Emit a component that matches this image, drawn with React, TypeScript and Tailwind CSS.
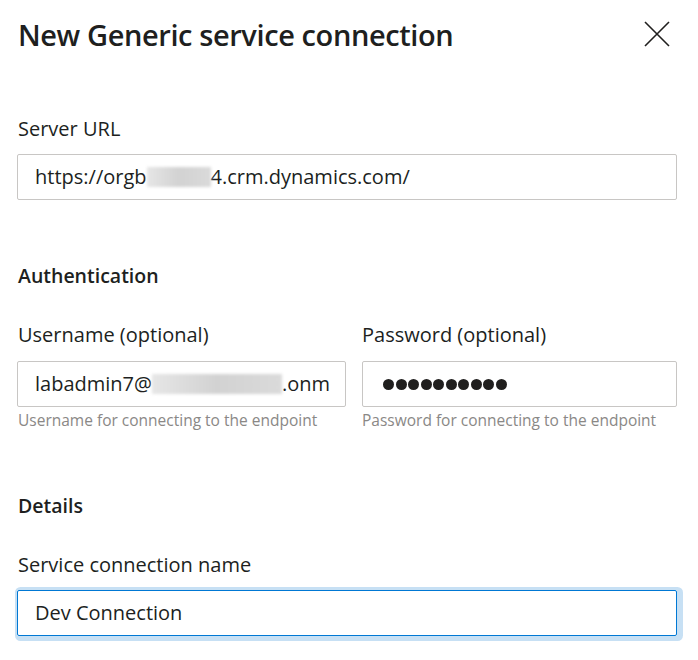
import React from "react";

function Blur({ w }: { w: number }) {
  return (
    <span
      className="inline-block h-[20px] bg-gradient-to-r from-[#e6e6e6] via-[#d2d2d2] to-[#dadada] blur-[1.5px]"
      style={{ width: w }}
    />
  );
}

export default function App() {
  return (
    <div
      className="w-[698px] h-[660px] bg-white text-[#201f1e] overflow-hidden"
      style={{ fontFamily: '"Open Sans", "Noto Sans", sans-serif' }}
    >
      <div className="h-[68px] flex items-center justify-between pl-[18px] pr-[28px]">
        <h1 className="text-[29px] font-semibold tracking-[-0.4px] leading-none">
          New Generic service connection
        </h1>
        <svg width="26" height="26" viewBox="0 0 26 26" className="text-[#201f1e]">
          <path d="M1 1 L25 25 M25 1 L1 25" stroke="currentColor" strokeWidth="1.6" fill="none" />
        </svg>
      </div>

      <div className="pl-[17px] pr-[21px] flex flex-col">
        <div className="mt-[47px] text-[20px] leading-[28px] pl-[1px]">Server URL</div>
        <div className="mt-[11px] h-[46px] border border-[#c8c6c4] rounded-[2px] flex items-center pl-[17px] text-[20px] whitespace-nowrap">
          <span>https://orgb</span>
          <Blur w={64} />
          <span>4.crm.dynamics.com/</span>
        </div>

        <div className="mt-[62px] text-[19.5px] leading-[28px] font-semibold pl-[1px]">Authentication</div>

        <div className="mt-[31px] grid grid-cols-[329px_315px] gap-x-[16px]">
          <div className="flex flex-col">
            <div className="text-[20px] leading-[28px] pl-[1px]">Username (optional)</div>
            <div className="mt-[12px] h-[46px] border border-[#c8c6c4] rounded-[2px] flex items-center pl-[17px] text-[20px] whitespace-nowrap overflow-hidden">
              <span>labadmin7@</span>
              <Blur w={130} />
              <span>.onm</span>
            </div>
            <div className="mt-[3px] text-[15.5px] leading-[20px] text-[#8a8886] pl-[1px] whitespace-nowrap">
              Username for connecting to the endpoint
            </div>
          </div>
          <div className="flex flex-col">
            <div className="text-[20px] leading-[28px]">Password (optional)</div>
            <div className="mt-[12px] h-[46px] border border-[#c8c6c4] rounded-[2px] flex items-center pl-[20px] gap-[1.5px]">
              {Array.from({ length: 10 }).map((_, i) => (
                <span key={i} className="w-[11px] h-[11px] rounded-full bg-[#201f1e] inline-block" />
              ))}
            </div>
            <div className="mt-[3px] text-[15.5px] leading-[20px] text-[#8a8886] whitespace-nowrap">
              Password for connecting to the endpoint
            </div>
          </div>
        </div>

        <div className="mt-[62px] text-[19.5px] leading-[28px] font-semibold pl-[1px]">Details</div>
        <div className="mt-[31px] text-[20px] leading-[28px] pl-[1px]">Service connection name</div>
        <div className="mt-[11px] h-[46px] border border-[#0078d4] rounded-[2px] flex items-center pl-[17px] text-[20px] shadow-[2px_1px_0_4px_#c7e0f4]">
          Dev Connection
        </div>
      </div>
    </div>
  );
}
